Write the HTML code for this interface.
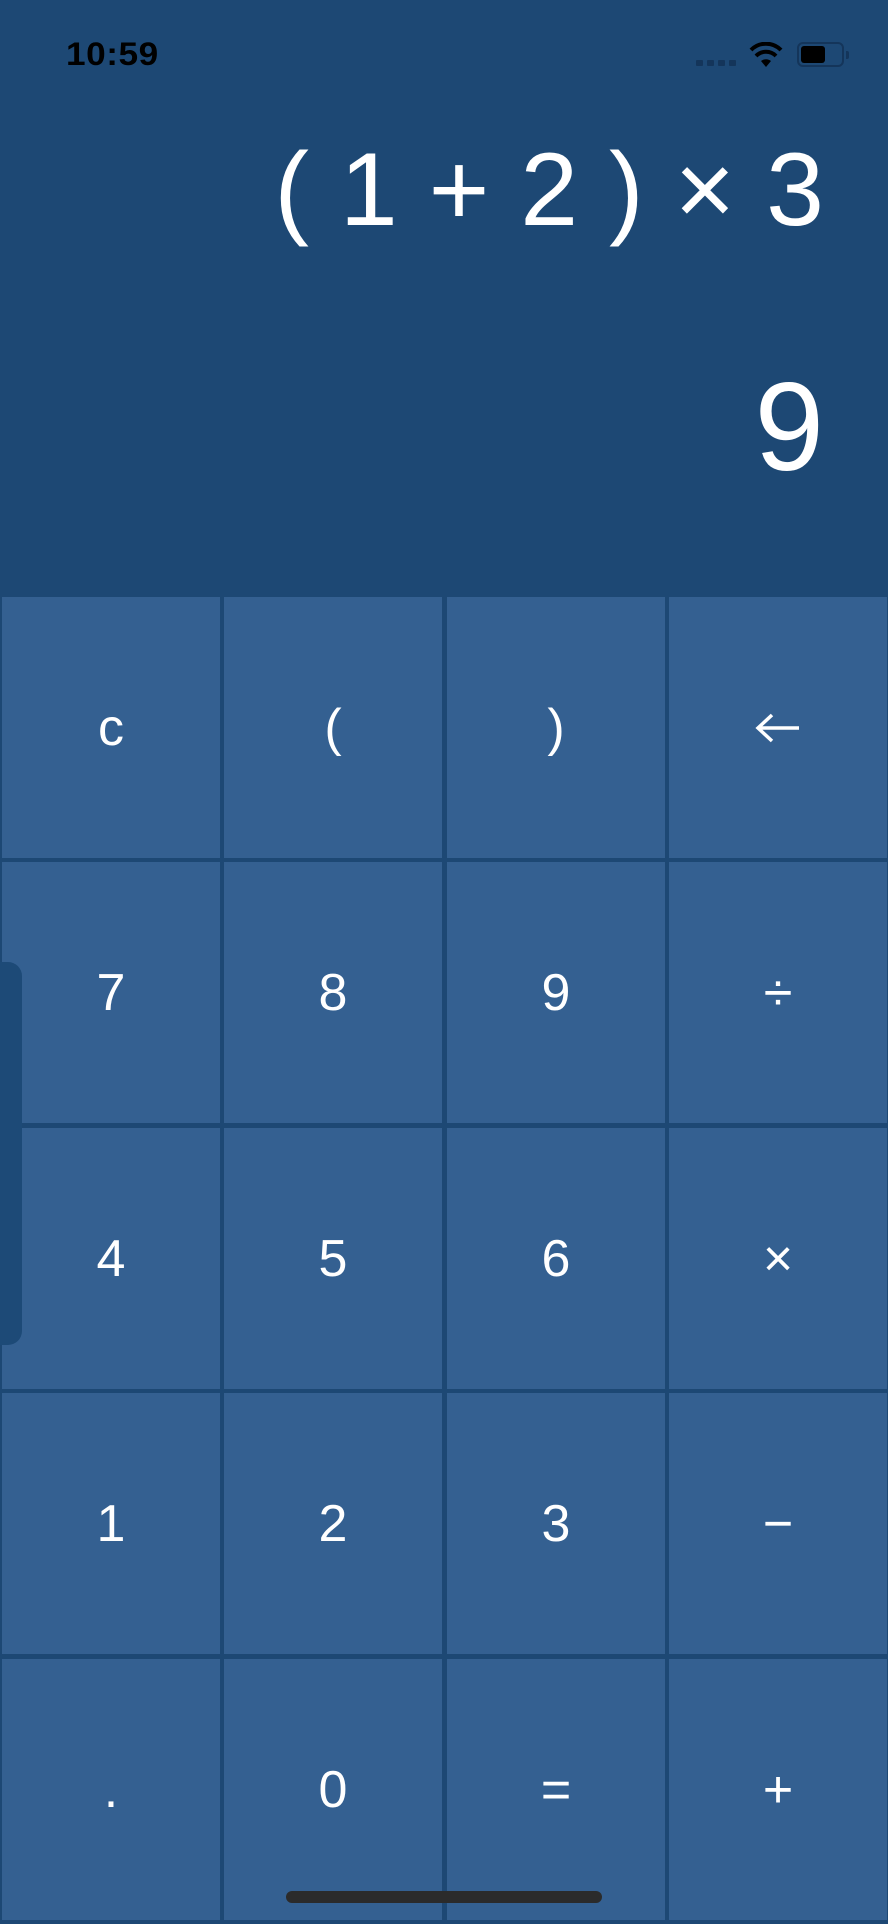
<!DOCTYPE html>
<html><head><meta charset="utf-8"><style>
*{margin:0;padding:0;box-sizing:border-box}
body{width:888px;height:1924px;background:#1d4874;position:relative;overflow:hidden;font-family:"Liberation Sans",Arial,sans-serif;color:#fff}
.k{position:absolute;background:#346091;width:218px;height:261px;display:flex;align-items:center;justify-content:center;font-size:52px}
.time{position:absolute;left:66px;top:36px;font-size:32px;font-weight:bold;color:#000;letter-spacing:0.5px;transform:scaleX(1.1);transform-origin:left}
.expr{position:absolute;right:64px;top:138px;font-size:104px;line-height:1;white-space:nowrap;word-spacing:2px}
.res{position:absolute;right:64px;top:365px;font-size:125px;line-height:1}
</style></head><body>
<div class="time">10:59</div>
<div style="position:absolute;left:696px;top:60px;width:40px;height:6px;display:flex;gap:4px">
<i style="width:7px;height:6px;background:#14355a;border-radius:1px"></i><i style="width:7px;height:6px;background:#14355a;border-radius:1px"></i><i style="width:7px;height:6px;background:#14355a;border-radius:1px"></i><i style="width:7px;height:6px;background:#14355a;border-radius:1px"></i></div>
<svg style="position:absolute;left:748px;top:42px" width="36" height="26" viewBox="0 0 36 26"><path d="M18 25 L13 19 A8 8 0 0 1 23 19 Z" fill="#000"/><path d="M8 14 A14 14 0 0 1 28 14" stroke="#000" stroke-width="4" fill="none"/><path d="M3 8 A21 21 0 0 1 33 8" stroke="#000" stroke-width="4" fill="none"/></svg>
<div style="position:absolute;left:797px;top:42px;width:47px;height:25px;border:2px solid #14355a;border-radius:6px"></div>
<div style="position:absolute;left:801px;top:46px;width:24px;height:17px;background:#000;border-radius:3px"></div>
<div style="position:absolute;left:846px;top:51px;width:3px;height:8px;background:#14355a;border-radius:0 2px 2px 0"></div>
<div class="expr">( 1 + 2 ) × 3</div>
<div class="res">9</div>

<div class="k" style="left:2px;top:597px">c</div>
<div class="k" style="left:224px;top:597px">(</div>
<div class="k" style="left:447px;top:597px">)</div>
<div class="k" style="left:669px;top:597px"><svg width="46" height="30" viewBox="0 0 46 30"><path d="M44 15H4M17 2L3 15L17 28" stroke="#fff" stroke-width="3.5" fill="none"/></svg></div>

<div class="k" style="left:2px;top:862px">7</div>
<div class="k" style="left:224px;top:862px">8</div>
<div class="k" style="left:447px;top:862px">9</div>
<div class="k" style="left:669px;top:862px">÷</div>

<div class="k" style="left:2px;top:1128px">4</div>
<div class="k" style="left:224px;top:1128px">5</div>
<div class="k" style="left:447px;top:1128px">6</div>
<div class="k" style="left:669px;top:1128px">×</div>

<div class="k" style="left:2px;top:1393px">1</div>
<div class="k" style="left:224px;top:1393px">2</div>
<div class="k" style="left:447px;top:1393px">3</div>
<div class="k" style="left:669px;top:1393px">−</div>

<div class="k" style="left:2px;top:1659px">.</div>
<div class="k" style="left:224px;top:1659px">0</div>
<div class="k" style="left:447px;top:1659px">=</div>
<div class="k" style="left:669px;top:1659px">+</div>

<div style="position:absolute;left:0;top:962px;width:22px;height:383px;background:#1d4a77;border-radius:0 14px 14px 0"></div>
<div style="position:absolute;left:286px;top:1891px;width:316px;height:12px;background:#2b2b2b;border-radius:6px"></div>
</body></html>
